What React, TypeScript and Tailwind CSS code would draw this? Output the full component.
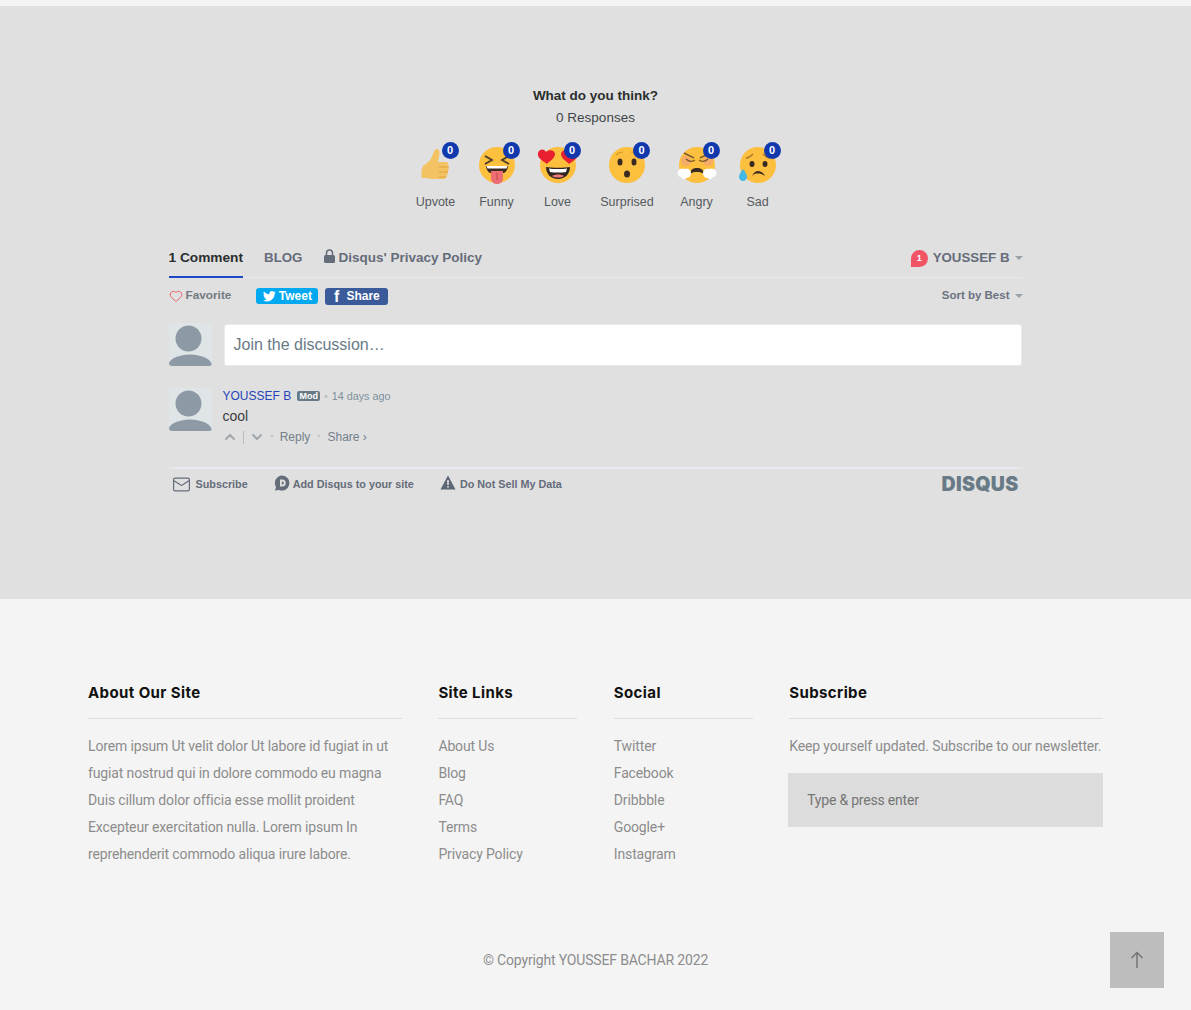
import { ChevronUp, ChevronDown, Heart, Mail } from 'lucide-react';
import type { ReactNode } from 'react';

const SKIN = '#fcbf3e';

function Face({ children }: { children: ReactNode }) {
  return (
    <svg width="40" height="40" viewBox="0 0 40 40" className="block overflow-visible">
      <circle cx="20" cy="20" r="18" fill={SKIN} />
      {children}
    </svg>
  );
}

function Thumb() {
  return (
    <svg width="40" height="40" viewBox="0 0 40 40" className="block">
      <path
        d="M7 21c3-2 7-5 9-9 1-3 2-8 5-8 3 0 3 5 2 8l-1 5h7c3 0 4 2 3 4 1 2 1 3 0 5 0 2 0 3-1 4 0 3-2 4-4 4H16c-3 0-3-1-6-1H6c-1-4-1-8 1-12z"
        fill="#f2c263"
      />
      <path d="M23 22h10M23 27h9M23 32h7" stroke="#dfa443" strokeWidth="1" fill="none" />
    </svg>
  );
}

function Funny() {
  return (
    <Face>
      <path d="M8 11l7 4-7 4M32 11l-7 4 7 4" stroke="#4a3a2a" strokeWidth="1.800" fill="none" />
      <path d="M9 21h22c0 3-2 6-4 7H13c-2-1-4-4-4-7z" fill="#3b2a22" />
      <path d="M9.500 21h21l-1 2.500h-19z" fill="#fff" />
      <path d="M14 26h12v7c0 4-3 6-6 6s-6-2-6-6z" fill="#ec6d72" />
      <path d="M20 28v7" stroke="#c9474f" strokeWidth="1" />
    </Face>
  );
}

function Love() {
  return (
    <Face>
      <path d="M8 22c4 1 20 1 24 0 0 7-5 12-12 12S8 29 8 22z" fill="#2f2522" />
      <path d="M11 23.500c4 .8 14 .8 18 0l-1 3.500c-4 .8-12 .8-16 0z" fill="#fff" />
      <path d="M14 31c3-2 9-2 12 0-3 2-9 2-12 0z" fill="#f07b7b" />
      <path d="M9 19C5 16-1 13 0 8c1-4 6-5 8-1 3-3 9-2 9 2 0 4-5 7-8 10z" fill="#e8202f" />
      <path d="M31 19c-3-3-8-6-8-10 0-4 6-5 9-2 2-4 7-3 8 1 1 5-5 8-9 11z" fill="#e8202f" />
    </Face>
  );
}

function Surprised() {
  return (
    <Face>
      <ellipse cx="13" cy="17" rx="2.500" ry="3.500" fill="#3b2a22" />
      <ellipse cx="27" cy="17" rx="2.500" ry="3.500" fill="#3b2a22" />
      <ellipse cx="20" cy="29" rx="3" ry="3.500" fill="#3b2a22" />
      <path d="M9 10c2-2 4-3 7-3M24 7c3 0 5 1 7 3" stroke="#d49a2a" strokeWidth="1.200" fill="none" />
    </Face>
  );
}

function Angry() {
  return (
    <svg width="40" height="40" viewBox="0 0 40 40" className="block">
      <circle cx="20" cy="20" r="18" fill={SKIN} />
      <circle cx="9" cy="16" r="5" fill="#f3a27a" opacity="0.7" />
      <circle cx="31" cy="16" r="5" fill="#f3a27a" opacity="0.7" />
      <path d="M7 8l10 5M33 8l-10 5M9 14c3 3 6 3 9 1M31 14c-3 3-6 3-9 1" stroke="#7a5a30" strokeWidth="1.400" fill="none" />
      <path d="M12 30c2-6 4-7 8-7s6 1 8 7c-3-3-5-3-8-3s-5 0-8 3z" fill="#3b2a22" />
      <path d="M1 26c2-3 5-3 7-2 3-1 6 1 6 4 0 3-2 5-5 5-1 2-4 1-5-1-3 0-4-4-3-6z" fill="#fff" />
      <path d="M39 26c-2-3-5-3-7-2-3-1-6 1-6 4 0 3 2 5 5 5 1 2 4 1 5-1 3 0 4-4 3-6z" fill="#fff" />
    </svg>
  );
}

function Sad() {
  return (
    <Face>
      <path d="M8 13c3 0 5-2 7-4M32 13c-3 0-5-2-7-4" stroke="#a3732a" strokeWidth="1.400" fill="none" />
      <ellipse cx="14" cy="19" rx="2.500" ry="3" fill="#3b2a22" />
      <ellipse cx="27" cy="19" rx="2.500" ry="3" fill="#3b2a22" />
      <path d="M14 31c2-4 4-5 6-5s5 1 7 5c-3-2-4-2.500-7-2.500s-4 .5-6 2.500z" fill="#3b2a22" />
      <path d="M5 24c2 3 4 5 4 8 0 2-2 4-4 4s-4-2-4-4c0-3 2-5 4-8z" fill="#43b8e6" />
    </Face>
  );
}

const reactions = [
  { label: 'Upvote', icon: <Thumb />, w: 'w-[57px]' },
  { label: 'Funny', icon: <Funny />, w: 'w-[65px]' },
  { label: 'Love', icon: <Love />, w: 'w-[57px]' },
  { label: 'Surprised', icon: <Surprised />, w: 'w-[82px]' },
  { label: 'Angry', icon: <Angry />, w: 'w-[57px]' },
  { label: 'Sad', icon: <Sad />, w: 'w-[65px]' },
];

function Avatar() {
  return (
    <div className="w-[43px] h-[43px] shrink-0 bg-[#dfe4e6] overflow-hidden rounded-[3px]">
      <svg width="43" height="43" viewBox="0 0 43 43" className="block">
        <circle cx="19.500" cy="15.500" r="13" fill="#8d9aa6" />
        <ellipse cx="21" cy="43" rx="22" ry="11.500" fill="#8d9aa6" />
      </svg>
    </div>
  );
}

function Caret() {
  return <span className="inline-block w-0 h-0 border-x-[4px] border-x-transparent border-t-[4px] border-t-[#9aa0a8]" />;
}

const about = [
  'Lorem ipsum Ut velit dolor Ut labore id fugiat in ut',
  'fugiat nostrud qui in dolore commodo eu magna',
  'Duis cillum dolor officia esse mollit proident',
  'Excepteur exercitation nulla. Lorem ipsum In',
  'reprehenderit commodo aliqua irure labore.',
];
const siteLinks = ['About Us', 'Blog', 'FAQ', 'Terms', 'Privacy Policy'];
const social = ['Twitter', 'Facebook', 'Dribbble', 'Google+', 'Instagram'];

function FooterCol({ title, children }: { title: string; children: ReactNode }) {
  return (
    <div>
      <h4 className="h-[18px] box-content pb-[16px] mb-[14px] border-b border-[#dedede] text-[15px] leading-[18px] font-bold tracking-[0.4px] text-[#111] font-['Inter',sans-serif]">
        {title}
      </h4>
      {children}
    </div>
  );
}

function Lines({ items }: { items: string[] }) {
  return (
    <ul className="text-[14px] leading-[27px] tracking-[-0.14px] text-[#8c8c8c]">
      {items.map((t) => (
        <li key={t} className="whitespace-nowrap">{t}</li>
      ))}
    </ul>
  );
}

export default function App() {
  return (
    <div className="relative min-h-[1010px] bg-[#f4f4f4] pt-[6px] font-['Roboto',sans-serif] overflow-hidden">
      {/* Disqus */}
      <section className="h-[593px] bg-[#e0e0e0] pt-[81px] font-['Liberation_Sans',sans-serif]">
        <div className="w-[854px] mx-auto">
          <div className="text-center">
            <p className="text-[13.500px] leading-[18px] font-bold text-[#2a2e2e]">What do you think?</p>
            <p className="mt-[4px] text-[13.500px] leading-[18px] text-[#3f4549]">0 Responses</p>
          </div>

          <div className="flex justify-center mt-[12px] ml-[6px]">
            {reactions.map((r) => (
              <div key={r.label} className={`${r.w} flex flex-col items-center`}>
                <div className="relative w-[40px] h-[40px] mt-[6px]">
                  {r.icon}
                  <span className="absolute -top-[3px] -right-[3px] w-[17px] h-[17px] rounded-full bg-[#1238ae] text-white text-[11px] leading-[17px] font-bold text-center">
                    0
                  </span>
                </div>
                <span className="mt-[9px] text-[12.500px] leading-[16px] text-[#555a5e]">{r.label}</span>
              </div>
            ))}
          </div>

          {/* tabs */}
          <div className="mt-[29px] h-[39px] border-b border-[#e7e9ee] flex items-start justify-between pt-[9px]">
            <div className="flex items-start text-[#656c7a] font-bold">
              <span className="h-[30px] border-b-2 border-[#1d49c4] text-[13.700px] leading-[20px] text-[#2a2e2e]">1 Comment</span>
              <span className="ml-[21px] text-[13.300px] leading-[20px]">BLOG</span>
              <span className="ml-[22px] flex items-center text-[13.500px] leading-[20px]">
                <svg width="11" height="14" viewBox="0 0 11 14" className="mr-[3px] -mt-[4px]">
                  <path d="M2.500 6V4a3 3 0 0 1 6 0v2" stroke="#656c7a" strokeWidth="1.500" fill="none" />
                  <rect x="0" y="6" width="11" height="8" rx="1.500" fill="#656c7a" />
                </svg>
                Disqus' Privacy Policy
              </span>
            </div>
            <div className="flex items-center font-bold text-[13.300px] leading-[20px] text-[#656c7a]">
              <span className="relative -ml-[1px] w-[17px] h-[17px] rounded-full rounded-bl-[3px] bg-[#f05465] text-white text-[9px] leading-[17px] text-center mr-[5px]">1</span>
              YOUSSEF B
              <span className="ml-[5px] flex"><Caret /></span>
            </div>
          </div>

          {/* actions */}
          <div className="mt-[9px] h-[18px] flex items-center justify-between text-[12px] font-bold text-[#687a86]">
            <div className="flex items-center">
              <Heart size={14} strokeWidth={1.500} className="text-[#f05465] -mt-[1px]" />
              <span className="ml-[3px] text-[11.800px] text-[#737a82]">Favorite</span>
              <span className="ml-[25px] w-[62px] h-[16px] rounded-[3px] bg-[#03a9f0] text-white leading-[16px] flex items-center justify-center gap-[3px]">
                <svg width="13" height="11" viewBox="0 0 24 20" fill="#fff">
                  <path d="M24 2.400c-.9.400-1.800.7-2.800.8 1-.6 1.800-1.600 2.200-2.700-1 .6-2 1-3.100 1.200C19.300.7 18 0 16.600 0c-2.700 0-4.900 2.200-4.900 4.900 0 .4 0 .8.1 1.100C7.700 5.800 4.100 3.900 1.700.9c-.4.7-.7 1.600-.7 2.500 0 1.700.9 3.200 2.200 4.100-.8 0-1.600-.2-2.200-.6v.1c0 2.400 1.700 4.400 3.900 4.800-.7.200-1.500.2-2.200.1.600 2 2.400 3.400 4.600 3.400-1.700 1.300-3.800 2.100-6.100 2.100-.4 0-.8 0-1.200-.1C2.200 18.200 4.800 19 7.500 19c9.100 0 14-7.500 14-14v-.6c1-.7 1.800-1.500 2.500-2z" />
                </svg>
                Tweet
              </span>
              <span className="ml-[7px] w-[63px] h-[17px] rounded-[3px] bg-[#3b5a9a] text-white leading-[17px] flex items-center justify-center gap-[7px]">
                <span className="text-[16px] font-bold">f</span>
                Share
              </span>
            </div>
            <div className="flex items-center text-[11.500px] text-[#6b7280]">
              Sort by Best
              <span className="ml-[5px] flex"><Caret /></span>
            </div>
          </div>

          {/* reply box */}
          <div className="mt-[18px] flex gap-[12px]">
            <Avatar />
            <div className="flex-1 mt-[1px] mr-[1px] h-[42px] rounded-[3px] bg-white border border-[#e8eaec] pl-[9px] text-[16px] leading-[40px] text-[#687a86]">
              Join the discussion…
            </div>
          </div>

          {/* comment */}
          <div className="mt-[22px] flex gap-[11px]">
            <Avatar />
            <div className="flex-1">
              <div className="flex items-center h-[16px] text-[12px] text-[#7f919e]">
                <span className="text-[12px] font-medium text-[#2545b8]">YOUSSEF B</span>
                <span className="ml-[6px] h-[10px] w-[23px] rounded-[2px] bg-[#687a86] text-white text-[9px] leading-[10px] font-bold text-center">Mod</span>
                <span className="mx-[4px] text-[#b5bec4] text-[10px]">•</span>
                <span className="text-[10.800px]">14 days ago</span>
              </div>
              <p className="mt-[3px] text-[14px] leading-[18px] text-[#3a3e40]">cool</p>
              <div className="mt-[4px] flex items-center h-[16px] text-[12px] text-[#737f8a]">
                <ChevronUp size={16} strokeWidth={3} className="ml-[-1px] text-[#a0a8ae]" />
                <span className="ml-[5px] w-px h-[13px] bg-[#b5bcc2]" />
                <ChevronDown size={16} strokeWidth={3} className="ml-[5px] text-[#a0a8ae]" />
                <span className="mx-[6px] text-[#c0c6cb] text-[9px]">•</span>
                <span>Reply</span>
                <span className="mx-[7px] text-[#c0c6cb] text-[9px]">•</span>
                <span>Share ›</span>
              </div>
            </div>
          </div>

          {/* footer links */}
          <div className="mt-[22px] border-t-2 border-[#e7e9ee] h-[32px] flex items-center justify-between text-[10.800px] font-bold text-[#656c7a]">
            <div className="flex items-center pl-[3px]">
              <Mail size={19} strokeWidth={1.500} className="text-[#656c7a]" />
              <span className="ml-[5px]">Subscribe</span>
              <svg width="16" height="16" viewBox="0 0 16 16" className="ml-[26px] mb-[2px]">
                <path d="M8 0.500a7.500 7.500 0 1 1-3 14.400L1 15.500l1-3.500A7.500 7.500 0 0 1 8 0.500z" fill="#656c7a" />
                <path d="M6 4.500h2.200a3.500 3.500 0 0 1 0 7H6z" fill="#e0e0e0" />
                <path d="M7.800 6.500h.5a1.500 1.500 0 0 1 0 3h-.5z" fill="#656c7a" />
              </svg>
              <span className="ml-[3px]">Add Disqus to your site</span>
              <svg width="16" height="15" viewBox="0 0 16 15" className="ml-[26px] mb-[3px]">
                <path d="M8 0.500L15.500 14.500H0.500z" fill="#5b6573" />
                <rect x="7.200" y="5" width="1.600" height="5" fill="#e0e0e0" />
                <rect x="7.200" y="11" width="1.600" height="1.600" fill="#e0e0e0" />
              </svg>
              <span className="ml-[4px]">Do Not Sell My Data</span>
            </div>
            <span className="pr-[4px] pt-[1px] text-[19.500px] font-black tracking-[0.3px] text-[#687a86] font-['Inter',sans-serif]">DISQUS</span>
          </div>
        </div>
      </section>

      {/* site footer */}
      <footer className="pt-[85px] pl-[88px]">
        <div className="grid grid-cols-[314px_139px_139px_314px] gap-x-[36.400px] w-[1015px]">
          <FooterCol title="About Our Site"><Lines items={about} /></FooterCol>
          <FooterCol title="Site Links"><Lines items={siteLinks} /></FooterCol>
          <FooterCol title="Social"><Lines items={social} /></FooterCol>
          <FooterCol title="Subscribe">
            <p className="text-[14px] leading-[27px] tracking-[-0.14px] text-[#8c8c8c] whitespace-nowrap">Keep yourself updated. Subscribe to our newsletter.</p>
            <div className="mt-[13px] -ml-[1px] h-[54px] bg-[#dcdcdc] pl-[19px] text-[14px] tracking-[-0.2px] leading-[54px] text-[#757575]">Type &amp; press enter</div>
          </FooterCol>
        </div>
      </footer>
      <p className="mt-[82px] text-center text-[14px] leading-[20px] tracking-[-0.16px] text-[#8c8c8c]">
        © Copyright YOUSSEF BACHAR 2022
      </p>

      <button className="absolute left-[1110px] top-[932px] w-[54px] h-[56px] bg-[#bdbdbd] flex items-center justify-center">
        <svg width="14" height="18" viewBox="0 0 14 18" fill="none" stroke="#757575" strokeWidth="1.500">
          <path d="M7 17V2M1.500 7L7 1.500 12.500 7" />
        </svg>
      </button>
    </div>
  );
}
